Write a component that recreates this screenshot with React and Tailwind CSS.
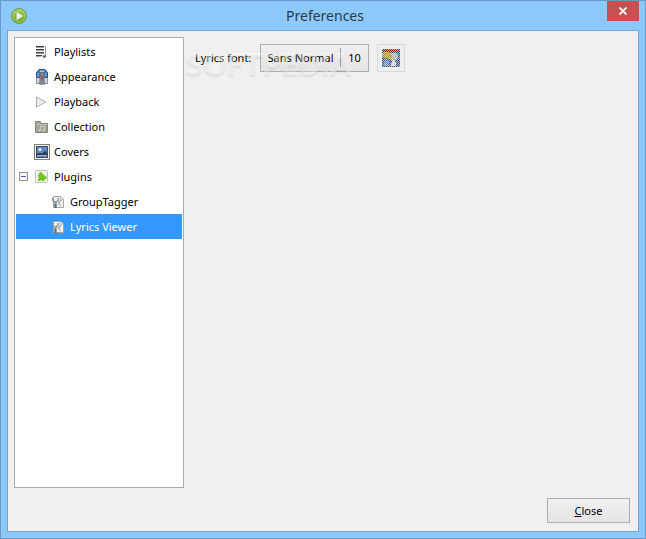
import React, { useState } from "react";

function PlayerLogo() {
    return (
        <svg width="16" height="16" viewBox="0 0 16 16" aria-hidden="true">
            <defs>
                <linearGradient id="logoGreen" x1="0" y1="0" x2="0" y2="1">
                    <stop offset="0" stopColor="#a4d05c" />
                    <stop offset="1" stopColor="#6fa82a" />
                </linearGradient>
            </defs>
            <circle cx="8" cy="8" r="7.4" fill="url(#logoGreen)" stroke="#5b8f20" strokeWidth="0.9" />
            <circle cx="8" cy="8" r="6.2" fill="none" stroke="#b4da7c" strokeWidth="0.8" />
            <path d="M5.4 3.4 L12.4 8 L5.4 12.6 Z" fill="#f1f3ea" stroke="#8aa765" strokeWidth="0.5" />
        </svg>
    );
}

function PlaylistsIcon() {
    return (
        <svg width="16" height="16" viewBox="0 0 16 16" aria-hidden="true">
            <path d="M2 2.5h8M2 5.5h8M2 8.5h8M2 11.5h6" stroke="#3f3f3f" />
            <path d="M2 3.5h8M2 6.5h8M2 9.5h8M2 12.5h5" stroke="#a0a0a0" />
            <path d="M11.5 2v10" stroke="#9a9a9a" />
            <ellipse cx="10.3" cy="12.5" rx="1.8" ry="1.3" fill="#666" />
        </svg>
    );
}

function AppearanceIcon() {
    return (
        <svg width="16" height="16" viewBox="0 0 16 16" aria-hidden="true">
            <path d="M2.5 5 V14.5 H13.5 V5 Z" fill="#cfdbea" stroke="#6d8099" strokeWidth="0.8" />
            <path d="M5 0.5 H11 L13.5 3.5 V8.5 H2.5 V3.5 Z" fill="#3f74b8" stroke="#2a4a7c" strokeWidth="0.9" />
            <path d="M5.4 1.4h5.2l-.8 2H6.2z" fill="#a9c4e4" />
            <path d="M4.2 4v4M11.8 4v4" stroke="#8fb4de" strokeWidth="1.1" />
            <path d="M6.2 3.6h3.6l.6 11.6H5.6z" fill="#8d8b90" stroke="#4d5563" strokeWidth="0.6" />
            <path d="M8 6.8v4.6" stroke="#96505a" strokeWidth="1.5" />
        </svg>
    );
}

function PlaybackIcon() {
    return (
        <svg width="16" height="16" viewBox="0 0 16 16" aria-hidden="true">
            <path d="M2.5 3 L12 8 L2.5 13 Z" fill="#ececec" stroke="#b0b0b0" strokeLinejoin="round" />
        </svg>
    );
}

function CollectionIcon() {
    return (
        <svg width="16" height="16" viewBox="0 0 16 16" aria-hidden="true">
            <path d="M1.5 13.5 V2.5 H6.5 V4.5 H13.5 V13.5 Z" fill="#a3a694" stroke="#83867a" />
            <path d="M2 5.5 H13" stroke="#bfc2b2" />
            <path d="M6.4 11V7.4h4v3.4" fill="none" stroke="#cfd2c4" strokeWidth="0.9" />
            <circle cx="5.6" cy="11.2" r="1.1" fill="#cfd2c4" />
            <circle cx="9.6" cy="11" r="1.1" fill="#cfd2c4" />
        </svg>
    );
}

function CoversIcon() {
    return (
        <svg width="16" height="16" viewBox="0 0 16 16" aria-hidden="true">
            <rect x="0.5" y="0.5" width="15" height="15" fill="#f6f6f4" stroke="#7b7d79" />
            <rect x="2.5" y="2.5" width="11" height="11" fill="#6289bd" stroke="#3a4a66" />
            <circle cx="6" cy="5.6" r="1.5" fill="#f2f3e2" />
            <path d="M3 9.6 L6 9 L8.2 9.4 L11 6.8 L13 9 V11 H3 Z" fill="#2c3c55" />
            <path d="M3 11.6h10" stroke="#9db2ce" />
        </svg>
    );
}

function PluginsIcon() {
    return (
        <svg width="16" height="16" viewBox="0 0 16 16" aria-hidden="true">
            <rect x="1.5" y="1.5" width="12" height="12" rx="1" fill="#f3f3f1" stroke="#c0c1bd" />
            <g fill="#73c51a">
                <path d="M4 5.5h6.5V12H8.4a1.3 1.3 0 0 0-2.3 0H4V9.9a1.2 1.2 0 0 0 0-2.2z" />
                <circle cx="6.8" cy="4.6" r="1.7" />
                <circle cx="11" cy="8.7" r="1.6" />
            </g>
        </svg>
    );
}

function PluginItemIcon() {
    return (
        <svg width="16" height="16" viewBox="0 0 16 16" aria-hidden="true">
            <path d="M3.5 2.5 H10.5 L13.5 5 V13.5 H3.5 Z" fill="#f4f4f2" stroke="#a3a5a1" />
            <path d="M10.3 2.6v2.4h2.8" fill="#fff" stroke="#a3a5a1" strokeWidth="0.8" />
            <path d="M2.6 3.8 v2.2 L4.6 8 h1.8 L8.2 6.2 V4" fill="none" stroke="#8a8d90" strokeWidth="1.3" />
            <path d="M11.2 5.8 L8 10" stroke="#a2a4a5" strokeWidth="1.4" />
            <path d="M5.5 8.5v1.5" stroke="#85898c" strokeWidth="2" />
            <path d="M5.5 10v4" stroke="#4d7196" strokeWidth="2.4" />
            <path d="M9 9.6l1.8 2.6" stroke="#b9bbba" strokeWidth="1.2" />
        </svg>
    );
}

function ColorsIcon() {
    return (
        <svg width="20" height="20" viewBox="0 0 20 20" aria-hidden="true">
            <defs>
                <pattern id="stipple" width="2" height="2" patternUnits="userSpaceOnUse">
                    <rect width="1" height="1" fill="#d6d6d6" />
                    <rect x="1" y="1" width="1" height="1" fill="#d6d6d6" />
                </pattern>
            </defs>
            <g shapeRendering="crispEdges">
                <rect x="1" y="1" width="18" height="18" rx="2" fill="#34558c" />
                <rect x="2" y="1" width="16" height="3" fill="#4a3434" />
                <rect x="6" y="1" width="11" height="2" fill="#b01818" />
                <path d="M1 5 L4 4 L12 5 L13 8 L9 11 L1 9 Z" fill="#a99a2c" />
                <path d="M10 5h6l1 4-3 3 2 6h-6l1-5-2-2 2-2z" fill="#b4b4ac" />
                <path d="M12 12l3 2-1 4h-4z" fill="#e8e8e4" />
                <path d="M4 11l4 2v5H3z" fill="#6984ad" />
                <rect x="1" y="1" width="18" height="18" fill="url(#stipple)" opacity="0.75" />
            </g>
        </svg>
    );
}

const pages = [
    { name: "Playlists", Icon: PlaylistsIcon },
    { name: "Appearance", Icon: AppearanceIcon },
    { name: "Playback", Icon: PlaybackIcon },
    { name: "Collection", Icon: CollectionIcon },
    { name: "Covers", Icon: CoversIcon },
    { name: "Plugins", Icon: PluginsIcon, children: ["GroupTagger", "Lyrics Viewer"] },
];

function TreeItem({ name, Icon, nested, selected, onSelect }) {
    return (
        <button
            type="button"
            onClick={() => onSelect(name)}
            className={`flex h-[25px] w-full items-center gap-1 text-left ${nested ? "pl-[34px]" : "pl-[18px]"} ${
                selected ? "bg-[#3399ff] text-white" : "text-black"
            }`}
        >
            <Icon />
            {name}
        </button>
    );
}

export default function App() {
    const [page, setPage] = useState("Lyrics Viewer");
    const [open, setOpen] = useState(true);

    return (
        <div className="flex min-h-screen flex-col border border-[#6999c4] bg-[#8cc8fa] font-['Noto_Sans','Open_Sans',sans-serif] text-[11px] leading-4 text-black">
            {/* Title bar */}
            <header className="flex h-[29px] items-start justify-between pr-1.5 pl-2.5">
                <div className="flex h-full w-8 items-center">
                    <PlayerLogo />
                </div>
                <h1 className="text-sm leading-[29px] text-[#2b3a48]">Preferences</h1>
                <button
                    type="button"
                    aria-label="Close window"
                    className="flex h-5 w-8 items-center justify-center bg-[#c75050]"
                >
                    <svg width="8" height="8" viewBox="0 0 8 8" aria-hidden="true">
                        <path d="M0.5 0.5 L7.5 7.5 M7.5 0.5 L0.5 7.5" stroke="#fff" strokeWidth="1.8" />
                    </svg>
                </button>
            </header>

            <div className="mx-1.5 mb-1.5 flex flex-1 flex-col border border-[#76a6d0] bg-[#f0f0f0]">
                <div className="flex flex-1 pt-1.5 pl-1.5">
                    {/* Page tree */}
                    <nav className="w-[170px] border border-[#a9acb2] bg-white p-px">
                        {pages.map(({ name, Icon, children }) => (
                            <div key={name} className="relative">
                                <TreeItem name={name} Icon={Icon} selected={page === name} onSelect={setPage} />
                                {children && (
                                    <button
                                        type="button"
                                        aria-label="Toggle plugins"
                                        aria-expanded={open}
                                        onClick={() => setOpen(!open)}
                                        className="absolute top-2 left-[3px] flex size-[9px] items-center justify-center border border-[#919191] bg-[#f8f8f8]"
                                    >
                                        <span className="h-px w-[5px] bg-[#4b63a7]" />
                                    </button>
                                )}
                                {children &&
                                    open &&
                                    children.map((child) => (
                                        <TreeItem
                                            key={child}
                                            name={child}
                                            Icon={PluginItemIcon}
                                            nested
                                            selected={page === child}
                                            onSelect={setPage}
                                        />
                                    ))}
                            </div>
                        ))}
                    </nav>

                    {/* Plugin settings */}
                    <main className="relative flex-1 pt-[7px] pl-[11px]">
                        <div className="flex items-center">
                            <label htmlFor="lyrics-font" className="w-[65px]">
                                Lyrics font:
                            </label>
                            <button
                                id="lyrics-font"
                                type="button"
                                className="flex h-7 w-[109px] items-center border border-[#adadad] bg-linear-to-b from-[#f0f0f0] to-[#e5e5e5]"
                            >
                                <span className="flex-1 text-center whitespace-nowrap">Sans Normal</span>
                                <span className="flex h-5 w-7 items-center justify-center border-l border-[#a0a0a0]">
                                    10
                                </span>
                            </button>
                            <button
                                type="button"
                                disabled
                                aria-label="Use theme colors"
                                className="ml-2 flex size-7 items-center justify-center border border-[#d9d9d9] bg-[#efefef]"
                            >
                                <ColorsIcon />
                            </button>
                        </div>
                        <span className="pointer-events-none absolute top-2.5 left-0.5 font-['Lato'] text-3xl leading-8 font-black text-white/40 [text-shadow:0_2px_2px_rgb(0_0_0/0.08)]">
                            SOFTPEDIA
                        </span>
                    </main>
                </div>

                <footer className="flex justify-end px-2 pt-2.5 pb-2">
                    <button
                        type="button"
                        className="h-[25px] w-[83px] border border-[#adadad] bg-linear-to-b from-[#f0f0f0] to-[#e5e5e5]"
                    >
                        <span className="underline">C</span>lose
                    </button>
                </footer>
            </div>
        </div>
    );
}
